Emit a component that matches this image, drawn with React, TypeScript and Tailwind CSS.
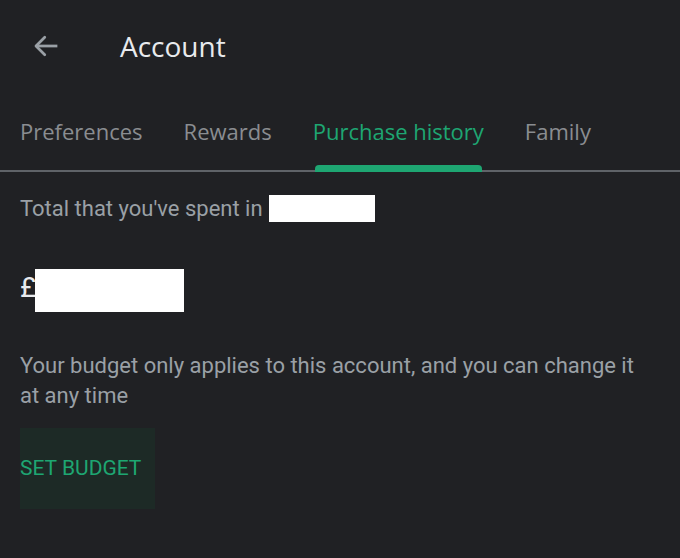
export default function App() {
  const tabs = ["Preferences", "Rewards", "Purchase history", "Family"];
  const active = "Purchase history";

  return (
    <div className="h-[558px] w-[680px] overflow-hidden bg-[#202124] font-['Roboto',sans-serif]">
      {/* top bar */}
      <div className="flex h-[92px] items-center">
        <button type="button" aria-label="Back" className="ml-[30px] flex h-8 w-8 items-center justify-center">
          <svg width="30" height="30" viewBox="0 0 24 24" fill="none" stroke="#9aa0a6" strokeWidth="2.2" strokeLinecap="square">
            <path d="M20 12H5" />
            <path d="M11 5l-7 7 7 7" strokeLinecap="round" strokeLinejoin="round" />
          </svg>
        </button>
        <h1 className="ml-[58px] font-['Open_Sans',sans-serif] text-[28px] font-medium text-[#e8eaed]">
          Account
        </h1>
      </div>

      {/* tabs */}
      <div className="flex h-[80px] items-stretch border-b-2 border-[#5f6368] px-5">
        {tabs.map((t) => (
          <div
            key={t}
            className={`relative mr-[41px] flex items-center font-['Open_Sans',sans-serif] text-[22px] ${
              t === active ? "text-[#1ea672]" : "text-[#8a8d91]"
            }`}
          >
            {t}
            {t === active && (
              <span className="absolute -bottom-[2px] left-[2px] right-[2px] h-[7px] rounded-t-[4px] bg-[#1ea672]" />
            )}
          </div>
        ))}
      </div>

      {/* content */}
      <div className="px-5">
        <div className="mt-[20px] flex items-center text-[22px] text-[#9aa0a6]">
          <span>Total that you've spent in</span>
          <span className="ml-[6px] inline-block h-[27px] w-[106px] bg-white" />
        </div>

        <div className="mt-[44px] flex items-end">
          <span className="pb-[10px] text-[28px] leading-none text-[#e8eaed]">£</span>
          <span className="-ml-[1px] inline-block h-[43px] w-[149px] bg-white" />
        </div>

        <p className="mt-[39px] max-w-[625px] text-[22px] leading-[30px] text-[#9aa0a6]">
          Your budget only applies to this account, and you can change it at any time
        </p>

        <button
          type="button"
          className="mt-[17px] flex h-[81px] w-[135px] items-center bg-[#1d2a26] text-[21px] uppercase text-[#1ea672]"
        >
          Set budget
        </button>
      </div>
    </div>
  );
}
